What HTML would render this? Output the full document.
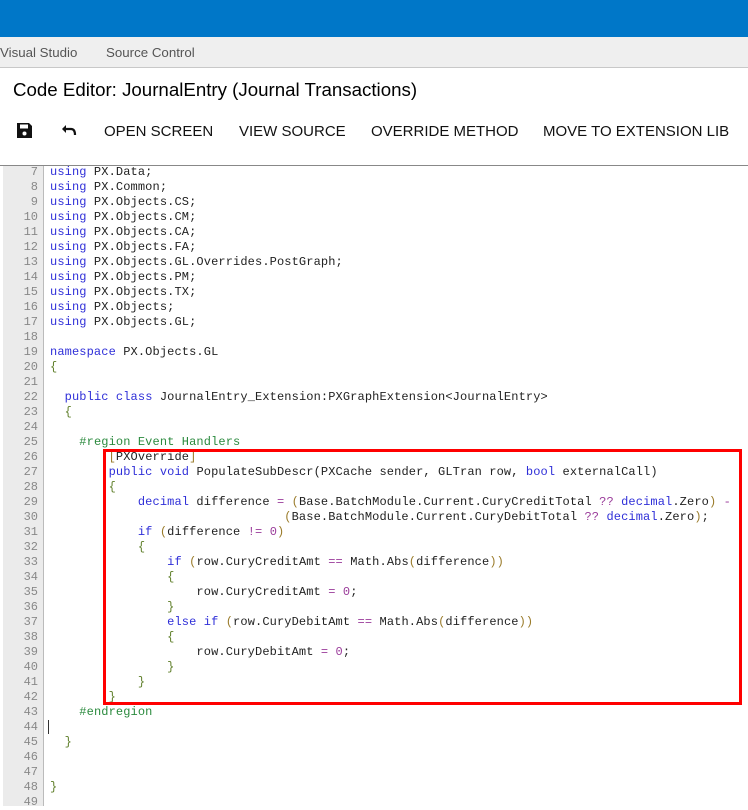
<!DOCTYPE html>
<html><head><meta charset="utf-8"><style>
body{margin:0;width:748px;height:801px;overflow:hidden;background:#fff;font-family:"Liberation Sans",Arial,sans-serif;position:relative}
.top{position:absolute;left:0;top:0;width:748px;height:37px;background:#0077c8}
.nav{position:absolute;left:0;top:37px;width:748px;height:30px;background:#efefef;border-bottom:1px solid #c8c8c8;font-size:13.3px;color:#555}
.nav span{position:absolute;top:8px}
.title{position:absolute;left:13px;top:79px;font-size:18.7px;color:#000}
.tb{position:absolute;top:123px;font-size:15px;color:#111}
.sep{position:absolute;left:0;top:165px;width:748px;height:1px;background:#888}
.gut{position:absolute;left:3px;top:166px;width:40px;height:640px;background:#ebebeb;border-right:1px solid #bbb}
pre{margin:0;position:absolute;top:165px;font-family:"Liberation Mono",monospace;font-size:12px;line-height:15px}
.nums{left:3px;width:35px;text-align:right;color:#888}
.code{left:50px;color:#222;letter-spacing:0.12px}
.k{color:#2f2fd8}.g{color:#2b8a3e}.b{color:#5f7f2a}.o{color:#9a3b9a}.s{color:#9a7b2a}
.red{position:absolute;left:103px;top:449px;width:633px;height:250px;border:3px solid #f00}
.caret{position:absolute;left:48px;top:720px;width:1px;height:14px;background:#333}
</style></head><body>
<div class="top"></div>
<div class="nav"><span style="left:0">Visual Studio</span><span style="left:106px">Source Control</span></div>
<div class="title">Code Editor: JournalEntry (Journal Transactions)</div>
<svg style="position:absolute;left:17px;top:123px" width="15" height="15" viewBox="0 0 15 15"><path d="M0 0H12L15 3V15H0Z" fill="#111"/><rect x="3" y="1.5" width="8" height="4" fill="#fff"/><circle cx="7.5" cy="10.5" r="2" fill="#fff"/></svg>
<svg style="position:absolute;left:61px;top:124px" width="16" height="12" viewBox="0 0 16 12"><path d="M5 1L1 5L5 9Z" fill="#111"/><path d="M3 5H10Q14 5 14 11" stroke="#111" stroke-width="2.2" fill="none"/></svg>
<div class="tb" style="left:104px">OPEN SCREEN</div>
<div class="tb" style="left:239px">VIEW SOURCE</div>
<div class="tb" style="left:371px">OVERRIDE METHOD</div>
<div class="tb" style="left:543px">MOVE TO EXTENSION LIB</div>
<div class="sep"></div>
<div class="gut"></div>
<pre class="nums">7
8
9
10
11
12
13
14
15
16
17
18
19
20
21
22
23
24
25
26
27
28
29
30
31
32
33
34
35
36
37
38
39
40
41
42
43
44
45
46
47
48
49</pre>
<pre class="code"><span class="k">using</span> PX.Data;
<span class="k">using</span> PX.Common;
<span class="k">using</span> PX.Objects.CS;
<span class="k">using</span> PX.Objects.CM;
<span class="k">using</span> PX.Objects.CA;
<span class="k">using</span> PX.Objects.FA;
<span class="k">using</span> PX.Objects.GL.Overrides.PostGraph;
<span class="k">using</span> PX.Objects.PM;
<span class="k">using</span> PX.Objects.TX;
<span class="k">using</span> PX.Objects;
<span class="k">using</span> PX.Objects.GL;

<span class="k">namespace</span> PX.Objects.GL
<span class="b">{</span>

  <span class="k">public class</span> JournalEntry_Extension:PXGraphExtension&lt;JournalEntry&gt;
  <span class="b">{</span>

    <span class="g">#region Event Handlers</span>
        <span class="s">[</span>PXOverride<span class="s">]</span>
        <span class="k">public void</span> PopulateSubDescr(PXCache sender, GLTran row, <span class="k">bool</span> externalCall)
        <span class="b">{</span>
            <span class="k">decimal</span> difference <span class="o">=</span> <span class="s">(</span>Base.BatchModule.Current.CuryCreditTotal <span class="o">??</span> <span class="k">decimal</span>.Zero<span class="s">)</span> <span class="o">-</span>
                                <span class="s">(</span>Base.BatchModule.Current.CuryDebitTotal <span class="o">??</span> <span class="k">decimal</span>.Zero<span class="s">)</span>;
            <span class="k">if</span> <span class="s">(</span>difference <span class="o">!=</span> <span class="o">0</span><span class="s">)</span>
            <span class="b">{</span>
                <span class="k">if</span> <span class="s">(</span>row.CuryCreditAmt <span class="o">==</span> Math.Abs<span class="s">(</span>difference<span class="s">))</span>
                <span class="b">{</span>
                    row.CuryCreditAmt <span class="o">=</span> <span class="o">0</span>;
                <span class="b">}</span>
                <span class="k">else if</span> <span class="s">(</span>row.CuryDebitAmt <span class="o">==</span> Math.Abs<span class="s">(</span>difference<span class="s">))</span>
                <span class="b">{</span>
                    row.CuryDebitAmt <span class="o">=</span> <span class="o">0</span>;
                <span class="b">}</span>
            <span class="b">}</span>
        <span class="b">}</span>
    <span class="g">#endregion</span>

  <span class="b">}</span>


<span class="b">}</span></pre>
<div class="red"></div>
<div class="caret"></div>
</body></html>
